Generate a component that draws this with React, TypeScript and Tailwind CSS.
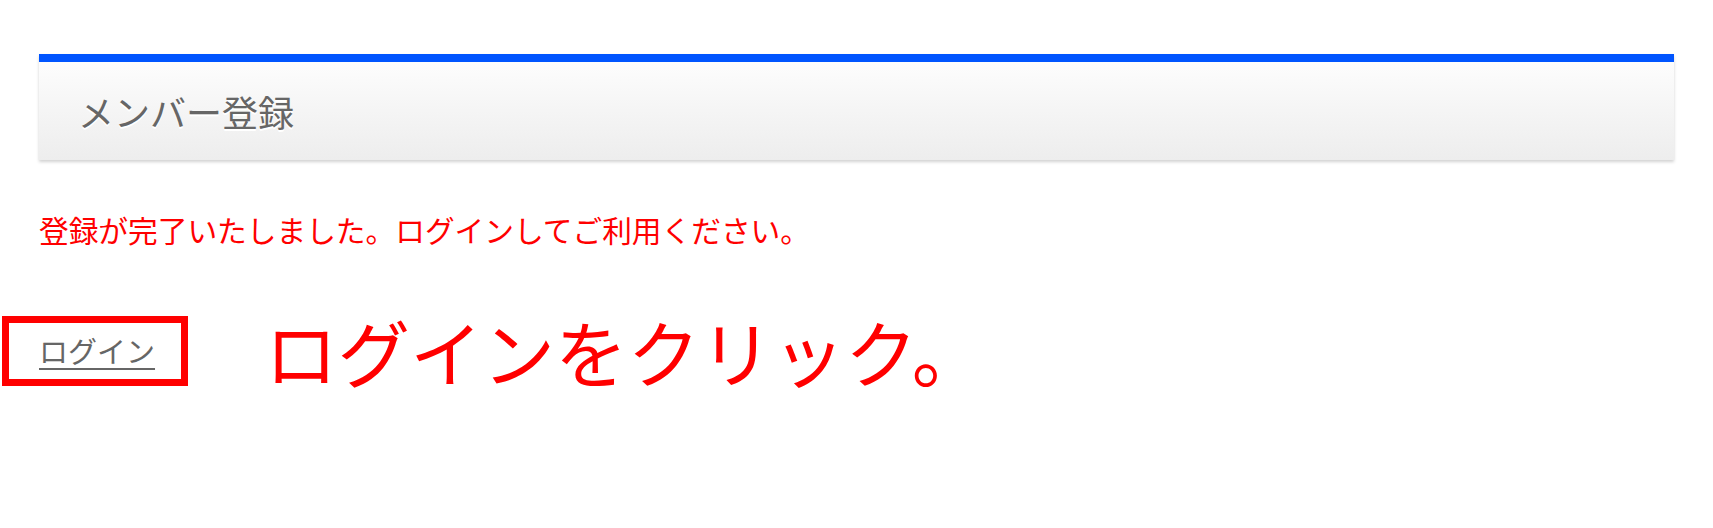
import React from "react";

const jp = "font-['Noto_Sans_CJK_JP','Noto_Sans',sans-serif]";

const App = () => {
  return (
    <div className={`w-full min-h-screen bg-white ${jp}`}>
      <div className="px-[39px] pt-[54px]">
        <div className="border-t-[8px] border-[#0055ff] bg-gradient-to-b from-[#fdfdfd] to-[#ededed] shadow-[0_2px_3px_rgba(0,0,0,0.18)] h-[106px] flex items-center pl-[39px]">
          <h2 className="text-[36px] text-[#666666] leading-none [text-shadow:0_2px_0_#ffffff]">
            メンバー登録
          </h2>
        </div>
      </div>

      <p className="pl-[39px] mt-[55px] text-[29.7px] leading-none text-[#ff0000]">
        登録が完了いたしました。ログインしてご利用ください。
      </p>

      <div className="flex items-center mt-[70px] pl-[2px]">
        <div className="border-[7px] border-[#ff0000] h-[70px] w-[186px] flex items-center pl-[30px]">
          <a
            href="#"
            className="text-[29px] leading-none text-[#666666] underline underline-offset-[5px] decoration-[2px]"
          >
            ログイン
          </a>
        </div>
        <span className="ml-[77px] text-[72.5px] leading-none font-normal text-[#ff0000]">
          ログインをクリック。
        </span>
      </div>
    </div>
  );
};

export default App;
